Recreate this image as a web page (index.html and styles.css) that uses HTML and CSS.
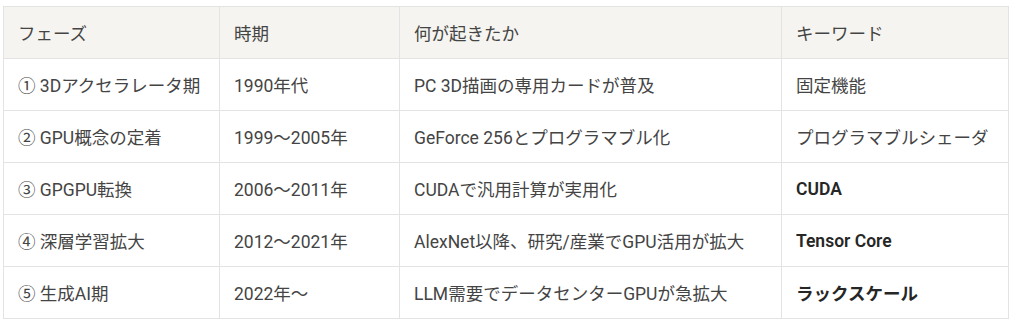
FILE: index.html
```html
<!DOCTYPE html>
<html lang="ja">
<head>
<meta charset="utf-8">
<link rel="stylesheet" href="styles.css">
</head>
<body>
<div class="wrap">
<table class="tbl">
  <colgroup>
    <col class="c1"><col class="c2"><col class="c3"><col class="c4">
  </colgroup>
  <thead>
    <tr><th>フェーズ</th><th>時期</th><th>何が起きたか</th><th>キーワード</th></tr>
  </thead>
  <tbody>
    <tr><td>① 3Dアクセラレータ期</td><td>1990年代</td><td>PC 3D描画の専用カードが普及</td><td>固定機能</td></tr>
    <tr><td>② GPU概念の定着</td><td>1999〜2005年</td><td>GeForce 256とプログラマブル化</td><td>プログラマブルシェーダ</td></tr>
    <tr><td>③ GPGPU転換</td><td>2006〜2011年</td><td>CUDAで汎用計算が実用化</td><td><strong>CUDA</strong></td></tr>
    <tr><td>④ 深層学習拡大</td><td>2012〜2021年</td><td>AlexNet以降、研究/産業でGPU活用が拡大</td><td><strong>Tensor Core</strong></td></tr>
    <tr><td>⑤ 生成AI期</td><td>2022年〜</td><td>LLM需要でデータセンターGPUが急拡大</td><td><strong>ラックスケール</strong></td></tr>
  </tbody>
</table>
</div>
</body>
</html>
```
FILE: styles.css
```css
html, body {
  margin: 0;
  padding: 0;
  background: #ffffff;
}
.wrap {
  padding: 6px 7px 0 3px;
}
.tbl {
  width: 1005px;
  border-collapse: collapse;
  table-layout: fixed;
  font-family: Roboto, "Noto Sans CJK JP", sans-serif;
  font-size: 17.5px;
  color: #444444;
}
.c1 { width: 216px; }
.c2 { width: 180px; }
.c3 { width: 382px; }
.c4 { width: 227px; }
.tbl th, .tbl td {
  border: 1px solid #e3e3e3;
  height: 52px;
  padding: 0 14px;
  text-align: left;
  font-weight: 400;
  white-space: nowrap;
  box-sizing: border-box;
}
.tbl thead th {
  background: #f5f4f0;
}
.tbl strong {
  font-weight: 600;
  color: #262626;
}
```
